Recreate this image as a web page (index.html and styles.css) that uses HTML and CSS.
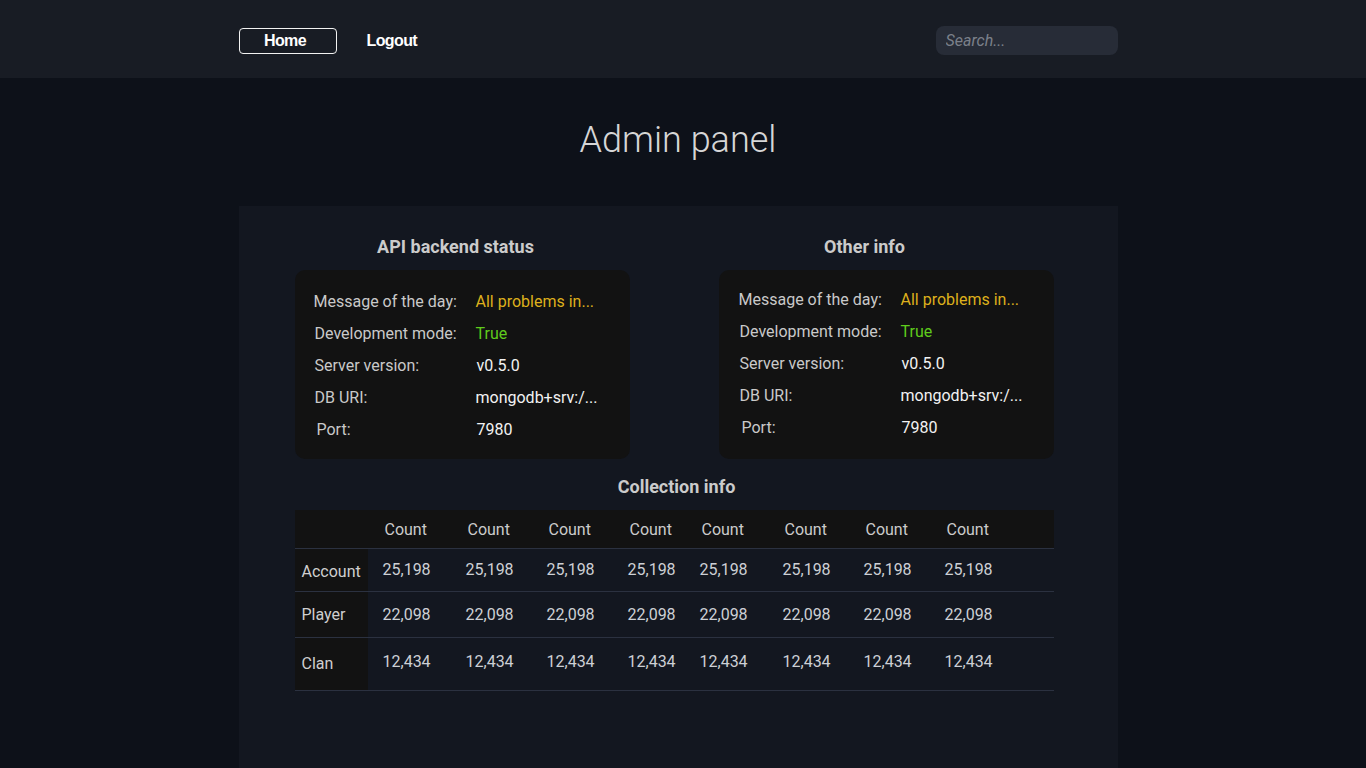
FILE: index.html
```html
<!DOCTYPE html>
<html lang="en">
<head>
<meta charset="utf-8">
<title>Admin panel</title>
<link rel="stylesheet" href="styles.css">
</head>
<body>
<header class="topbar">
  <div class="topbar-inner">
    <nav class="nav">
      <a class="nav-btn nav-active" href="#">Home</a>
      <a class="nav-btn nav-plain" href="#">Logout</a>
    </nav>
    <input class="search" type="text" placeholder="Search...">
  </div>
</header>
<main class="main">
  <h1 class="title">Admin panel</h1>
  <section class="panel">
    <div class="info-grid">
      <div class="info-section">
        <h2 class="section-title shift-a">API backend status</h2>
        <div class="card">
          <div class="row"><span class="label">Message of the day:</span><span class="value warn">All problems in...</span></div>
          <div class="row"><span class="label l1">Development mode:</span><span class="value ok">True</span></div>
          <div class="row"><span class="label l1">Server version:</span><span class="value v1">v0.5.0</span></div>
          <div class="row"><span class="label l1">DB URI:</span><span class="value">mongodb+srv:/...</span></div>
          <div class="row last"><span class="label l3">Port:</span><span class="value v1">7980</span></div>
        </div>
      </div>
      <div class="info-section">
        <h2 class="section-title shift-b">Other info</h2>
        <div class="card card-b">
          <div class="row"><span class="label">Message of the day:</span><span class="value warn">All problems in...</span></div>
          <div class="row"><span class="label l1">Development mode:</span><span class="value ok">True</span></div>
          <div class="row"><span class="label l1">Server version:</span><span class="value v1">v0.5.0</span></div>
          <div class="row"><span class="label l1">DB URI:</span><span class="value">mongodb+srv:/...</span></div>
          <div class="row last"><span class="label l3">Port:</span><span class="value v1">7980</span></div>
        </div>
      </div>
    </div>
    <h2 class="section-title coll-title">Collection info</h2>
    <table class="coll">
      <colgroup>
        <col class="c-head"><col class="c83"><col class="c81"><col class="c81"><col class="c72"><col class="c83"><col class="c81"><col class="c81"><col>
      </colgroup>
      <thead>
        <tr class="hrow"><th class="corner"></th><th>Count</th><th>Count</th><th>Count</th><th>Count</th><th>Count</th><th>Count</th><th>Count</th><th>Count</th></tr>
      </thead>
      <tbody>
        <tr class="r1"><th>Account</th><td>25,198</td><td>25,198</td><td>25,198</td><td>25,198</td><td>25,198</td><td>25,198</td><td>25,198</td><td>25,198</td></tr>
        <tr class="r2"><th>Player</th><td>22,098</td><td>22,098</td><td>22,098</td><td>22,098</td><td>22,098</td><td>22,098</td><td>22,098</td><td>22,098</td></tr>
        <tr class="r3"><th>Clan</th><td>12,434</td><td>12,434</td><td>12,434</td><td>12,434</td><td>12,434</td><td>12,434</td><td>12,434</td><td>12,434</td></tr>
      </tbody>
    </table>
  </section>
</main>
</body>
</html>
```

FILE: styles.css
```css
* { box-sizing: border-box; }
html, body { margin: 0; padding: 0; }
body {
  background: #0d1119;
  font-family: Roboto, "Liberation Sans", sans-serif;
  color: #c9c9c9;
  overflow: hidden;
  height: 768px;
}
.topbar {
  background: #181c24;
  height: 78px;
  padding-right: 10px;
}
.topbar-inner {
  width: 879px;
  margin: 0 auto;
  height: 78px;
  padding-top: 3px;
  display: flex;
  align-items: center;
  justify-content: space-between;
}
.nav { display: flex; align-items: center; }
.nav-btn {
  font-family: "Liberation Sans", Arial, sans-serif;
  font-weight: 700;
  font-size: 16px;
  letter-spacing: -0.6px;
  color: #ffffff;
  text-decoration: none;
  height: 26px;
  line-height: 24px;
  border-radius: 4px;
}
.nav-active {
  width: 98px;
  padding-right: 5px;
  text-align: center;
  border: 1px solid #f2f2f2;
}
.nav-plain {
  margin-left: 29px;
  border: 1px solid transparent;
}
.search {
  width: 182px;
  height: 29px;
  border: none;
  outline: none;
  border-radius: 8px;
  background: #272c37;
  padding: 0 10px;
  font-family: Roboto, sans-serif;
  font-size: 16px;
  color: #ddd;
}
.search::placeholder {
  color: #7b808a;
  font-style: italic;
}
.main {
  padding-right: 10px;
}
.title {
  margin: 38px 0 42px;
  text-align: center;
  font-weight: 300;
  font-size: 36px;
  line-height: 48px;
  color: #d6d6d6;
}
.panel {
  width: 879px;
  margin: 0 auto;
  background: #131720;
  min-height: 600px;
  padding: 29px 64px 0 56px;
}
.info-grid {
  display: grid;
  grid-template-columns: 335px 335px;
  column-gap: 89px;
}
.section-title {
  margin: 0 0 11px;
  font-size: 18px;
  font-weight: 700;
  line-height: 24px;
  text-align: center;
  color: #cbcbcb;
}
.shift-a { padding-right: 13px; }
.shift-b { padding-right: 43px; }
.card {
  background: #121212;
  border-radius: 10px;
  padding: 15px 0 13px 19px;
}
.card-b { padding: 13px 0 15px 20px; }
.row {
  display: grid;
  grid-template-columns: 162px 1fr;
  height: 32px;
  align-items: center;
  font-size: 16px;
}
.row.last { height: 33px; }
.label { color: #c9c9c9; }
.l1 { padding-left: 1px; }
.l3 { padding-left: 3px; }
.value { color: #f2f2f2; }
.v1 { padding-left: 1px; }
.warn { color: #deb01c; }
.ok { color: #5fcb1c; }
.coll-title {
  margin: 16px 0 11px;
  padding-left: 5px;
  width: 759px;
}
.coll {
  width: 759px;
  border-collapse: collapse;
  font-size: 16px;
  table-layout: fixed;
}
.c-head { width: 73px; }
.c83 { width: 83px; }
.c81 { width: 81px; }
.c72 { width: 72px; }
.coll th, .coll td {
  padding: 0 0 0 16px;
  text-align: left;
  font-weight: 400;
  color: #cdd0d5;
  white-space: nowrap;
}
.coll td { padding-left: 15px; }
.hrow { background: #121212; height: 38px; }
.hrow th { color: #cbcbcb; padding-left: 17px; padding-top: 2px; }
.hrow th.corner { padding: 0; }
.coll tbody tr { border-top: 1px solid #2b3140; }
.coll tbody tr:last-child { border-bottom: 1px solid #2b3140; }
.coll tbody th {
  background: #121212;
  padding-left: 7px;
  color: #cfcfcf;
}
.r1 { height: 43px; }
.r1 th { padding-top: 4px; }
.r2 { height: 46px; }
.r3 { height: 53px; }
.r3 th { padding-left: 8px; }
.r3 td { padding-bottom: 5px; }
```
